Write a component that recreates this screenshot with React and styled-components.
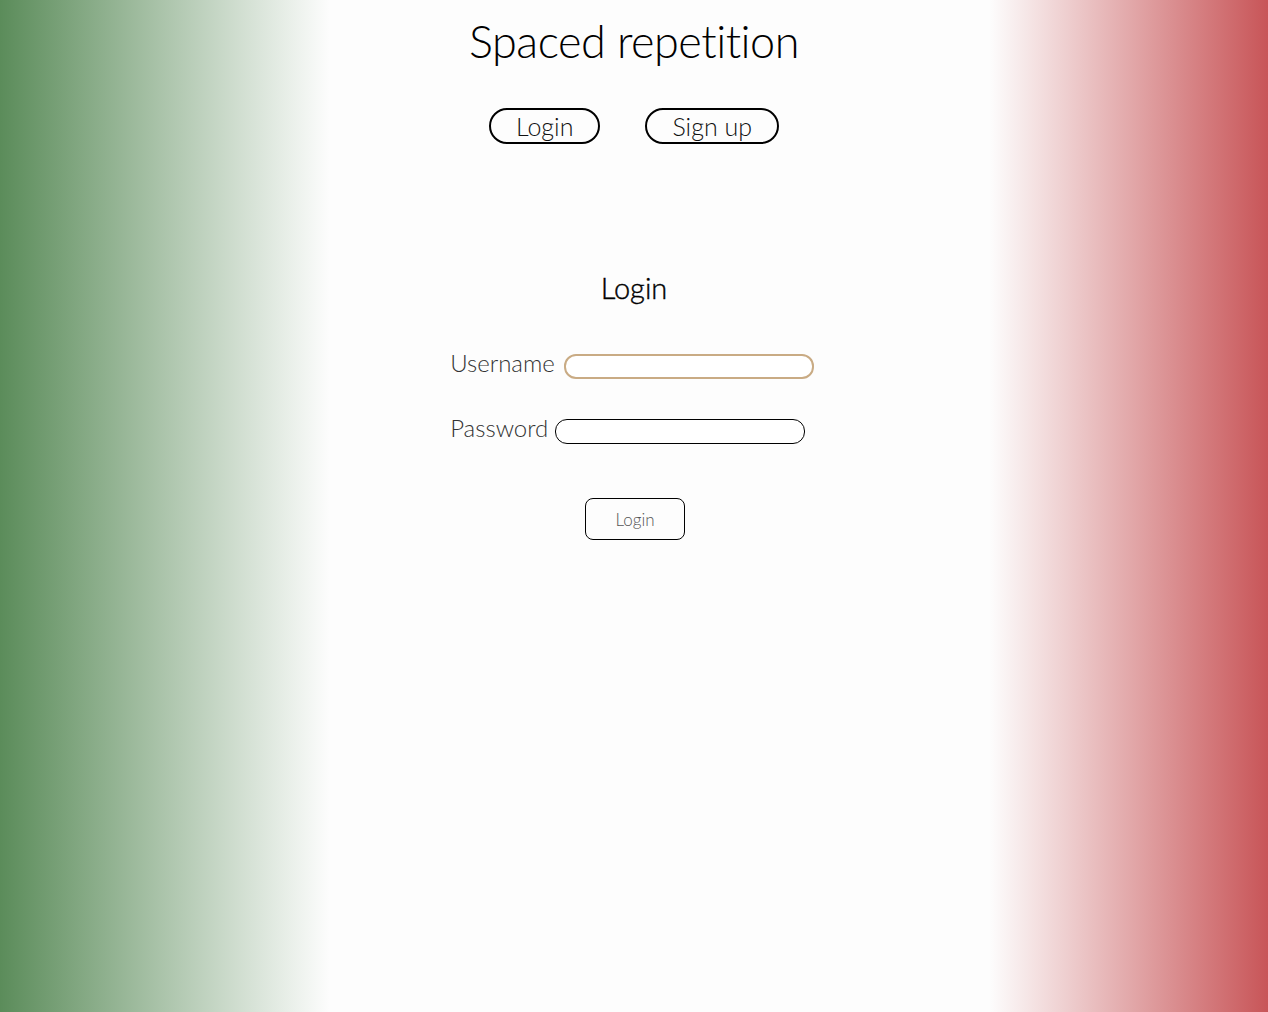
import React from "react";
import styled, { createGlobalStyle } from "styled-components";

const Global = createGlobalStyle`
  html, body { margin: 0; padding: 0; }
  body {
    font-family: Lato, "Noto Sans", sans-serif;
    font-weight: 300;
    color: #000;
    background: linear-gradient(to right, #5b8c5a 0%, #fdfdfd 26%, #fdfdfd 78%, #c85558 100%);
    min-height: 1012px;
  }
`;

const Page = styled.div`
  min-height: 1012px;
  display: flex;
  flex-direction: column;
  align-items: center;
`;

const Title = styled.h1`
  margin: 14px 0 0;
  font-size: 45px;
  font-weight: 300;
  line-height: 54px;
  letter-spacing: -0.5px;
`;

const Nav = styled.nav`
  display: flex;
  gap: 45px;
  margin-top: 40px;
`;

const NavButton = styled.button`
  font-family: inherit;
  font-weight: 300;
  font-size: 25px;
  line-height: 30px;
  height: 36px;
  padding: 0 ${(p) => p.$pad}px;
  background: transparent;
  border: 2px solid #000;
  border-radius: 18px;
  color: #111;
`;

const FormTitle = styled.h2`
  margin: 124px 0 0;
  font-size: 29px;
  font-weight: 300;
  line-height: 40px;
  color: #000;
  -webkit-text-stroke: 0.4px #000;
`;

const Form = styled.form`
  margin-top: 45px;
  display: flex;
  flex-direction: column;
  align-items: flex-start;
  gap: 39px;
  padding-right: 4px;
`;

const Row = styled.div`
  display: flex;
  align-items: center;
  gap: ${(p) => p.$gap}px;
  height: 26px;
`;

const Label = styled.label`
  font-size: 24px;
  font-weight: 300;
  color: #333;
  position: relative;
  top: -4px;
`;

const Input = styled.input`
  width: 250px;
  height: 25px;
  box-sizing: border-box;
  border: ${(p) => (p.$focused ? "2px solid #c9ab84" : "1px solid #000")};
  border-radius: 12px;
  background: #fff;
  outline: none;
  padding: 0 10px;
  font-family: inherit;
  font-size: 18px;
`;

const Submit = styled.button`
  margin: 54px 0 0 2px;
  width: 100px;
  height: 42px;
  border: 1px solid #000;
  border-radius: 8px;
  background: transparent;
  font-family: inherit;
  font-weight: 300;
  font-size: 17px;
  color: #555;
`;

export default function App() {
  return (
    <>
      <Global />
      <Page>
        <Title>Spaced repetition</Title>
        <Nav>
          <NavButton $pad={25}>Login</NavButton>
          <NavButton $pad={25}>Sign up</NavButton>
        </Nav>
        <FormTitle>Login</FormTitle>
        <Form onSubmit={(e) => e.preventDefault()}>
          <Row $gap={9}>
            <Label htmlFor="u">Username</Label>
            <Input id="u" $focused autoFocus />
          </Row>
          <Row $gap={7}>
            <Label htmlFor="p">Password</Label>
            <Input id="p" type="password" />
          </Row>
        </Form>
        <Submit>Login</Submit>
      </Page>
    </>
  );
}
